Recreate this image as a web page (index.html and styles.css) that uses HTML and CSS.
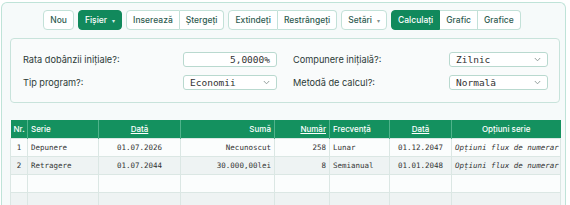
FILE: index.html
```html
<!DOCTYPE html>
<html lang="ro">
<head>
<meta charset="utf-8">
<title>Calculator</title>
<link rel="stylesheet" href="styles.css">
</head>
<body>
<div class="app">
  <div class="toolbar">
    <button class="btn">Nou</button>
    <button class="btn primary">Fișier <span class="caret">▾</span></button>
    <div class="group">
      <button class="btn">Inserează</button>
      <button class="btn">Ștergeți</button>
    </div>
    <div class="group">
      <button class="btn">Extindeți</button>
      <button class="btn">Restrângeți</button>
    </div>
    <button class="btn">Setări <span class="caret grey">▾</span></button>
    <div class="group">
      <button class="btn primary">Calculați</button>
      <button class="btn">Grafic</button>
      <button class="btn">Grafice</button>
    </div>
  </div>

  <div class="panel">
    <div class="col col-left">
      <div class="field">
        <span class="label">Rata dobânzii inițiale?:</span>
        <span class="control input">5,0000%</span>
      </div>
      <div class="field">
        <span class="label">Tip program?:</span>
        <span class="control select">Economii<svg class="chev" width="7" height="5" viewBox="0 0 7 5"><path d="M0.8 1 L3.5 3.8 L6.2 1" fill="none" stroke="#8a9693" stroke-width="0.9"/></svg></span>
      </div>
    </div>
    <div class="col col-right">
      <div class="field">
        <span class="label">Compunere inițială?:</span>
        <span class="control select">Zilnic<svg class="chev" width="7" height="5" viewBox="0 0 7 5"><path d="M0.8 1 L3.5 3.8 L6.2 1" fill="none" stroke="#8a9693" stroke-width="0.9"/></svg></span>
      </div>
      <div class="field">
        <span class="label">Metodă de calcul?:</span>
        <span class="control select">Normală<svg class="chev" width="7" height="5" viewBox="0 0 7 5"><path d="M0.8 1 L3.5 3.8 L6.2 1" fill="none" stroke="#8a9693" stroke-width="0.9"/></svg></span>
      </div>
    </div>
  </div>

  <table class="grid">
    <colgroup>
      <col class="c-nr"><col class="c-serie"><col class="c-data"><col class="c-suma">
      <col class="c-numar"><col class="c-frec"><col class="c-data2"><col class="c-opt">
    </colgroup>
    <thead>
      <tr>
        <th class="left">Nr.</th>
        <th class="left">Serie</th>
        <th class="center"><u>Dată</u></th>
        <th class="right">Sumă</th>
        <th class="right"><u>Număr</u></th>
        <th class="left">Frecvență</th>
        <th class="center"><u>Dată</u></th>
        <th class="center">Opțiuni serie</th>
      </tr>
    </thead>
    <tbody>
      <tr>
        <td class="center">1</td>
        <td>Depunere</td>
        <td class="center">01.07.2026</td>
        <td class="right">Necunoscut</td>
        <td class="right">258</td>
        <td>Lunar</td>
        <td class="center">01.12.2047</td>
        <td class="center"><i>Opțiuni flux de numerar</i></td>
      </tr>
      <tr class="alt">
        <td class="center">2</td>
        <td>Retragere</td>
        <td class="center">01.07.2044</td>
        <td class="right">30.000,00lei</td>
        <td class="right">8</td>
        <td>Semianual</td>
        <td class="center">01.01.2048</td>
        <td class="center"><i>Opțiuni flux de numerar</i></td>
      </tr>
      <tr>
        <td></td><td></td><td></td><td></td><td></td><td></td><td></td><td></td>
      </tr>
      <tr class="alt">
        <td></td><td></td><td></td><td></td><td></td><td></td><td></td><td></td>
      </tr>
    </tbody>
  </table>
</div>
</body>
</html>
```

FILE: styles.css
```css
html, body {
  margin: 0;
  padding: 0;
  background: #ffffff;
  height: 205px;
  overflow: hidden;
}

body {
  font-family: Inter, "Liberation Sans", sans-serif;
  color: #2c3a37;
}

.app {
  margin: 2px 4px 0 1px;
  height: 203px;
  overflow: hidden;
  box-sizing: border-box;
  border: 1px solid #bfe3d8;
  border-bottom: 0;
  border-radius: 6px 6px 0 0;
  background: #f6fafa;
  padding: 7px 5px 0 8px;
}

/* toolbar */
.toolbar {
  display: flex;
  justify-content: center;
  gap: 4px;
  height: 20px;
  margin-left: -6px;
}

.group {
  display: flex;
}

.btn {
  height: 20px;
  box-sizing: border-box;
  border: 1px solid #c3e1d8;
  background: #ffffff;
  border-radius: 4px;
  font-family: Inter, "Liberation Sans", sans-serif;
  font-size: 8.5px;
  font-weight: 500;
  color: #2f5c51;
  padding: 0 6px;
  margin: 0;
  display: flex;
  align-items: center;
  gap: 5px;
}

.btn.primary {
  background: #11895c;
  border-color: #11895c;
  color: #ffffff;
}

.group .btn {
  border-radius: 0;
}

.group .btn + .btn {
  border-left: 0;
}

.group .btn:first-child {
  border-radius: 4px 0 0 4px;
}

.group .btn:last-child {
  border-radius: 0 4px 4px 0;
}

.caret {
  font-size: 6px;
  color: #d6efe6;
}

.caret.grey {
  color: #7f8e8a;
}

/* settings panel */
.panel {
  margin-top: 8px;
  height: 65px;
  box-sizing: border-box;
  border: 1px solid #c8e3db;
  border-radius: 4px;
  background: #f9fbfb;
  padding: 13px 11px 0 12px;
  display: flex;
  gap: 16px;
}

.col {
  display: flex;
  flex-direction: column;
  gap: 8px;
}

.col-left {
  width: 254px;
}

.col-right {
  width: 255px;
}

.field {
  display: flex;
  justify-content: space-between;
  align-items: center;
  height: 15px;
}

.label {
  font-size: 9.2px;
  color: #2c3a37;
}

.control {
  height: 15px;
  box-sizing: border-box;
  border: 1px solid #b9d9cf;
  border-radius: 3px;
  background: #ffffff;
  font-family: "DejaVu Sans Mono", monospace;
  font-size: 9.5px;
  color: #333333;
  display: flex;
  align-items: center;
  padding: 0 6px;
}

.col-left .control {
  width: 94px;
}

.col-right .control {
  width: 99px;
}

.input {
  justify-content: flex-end;
}

.select {
  justify-content: space-between;
}

.chev {
  display: block;
}

/* table */
.grid {
  margin-top: 17px;
  width: 550px;
  border-collapse: collapse;
  table-layout: fixed;
  font-family: "DejaVu Sans Mono", monospace;
  font-size: 7.5px;
  color: #333333;
}

.c-nr { width: 17px; }
.c-serie { width: 71px; }
.c-data { width: 82px; }
.c-suma { width: 94px; }
.c-numar { width: 55px; }
.c-frec { width: 60px; }
.c-data2 { width: 62px; }
.c-opt { width: 109px; }

.grid th {
  height: 18px;
  background: #14915f;
  color: #ffffff;
  font-family: Inter, "Liberation Sans", sans-serif;
  font-size: 8px;
  font-weight: 500;
  border-left: 1px solid #4fb38b;
  padding: 0 3px;
}

.grid th:first-child {
  border-left: 0;
}

.grid td {
  height: 18px;
  box-sizing: border-box;
  padding: 0 3px;
  border: 1px solid #dbe7e4;
  background: #fbfdfd;
  white-space: nowrap;
  overflow: hidden;
}

.grid tr.alt td {
  background: #eef3f3;
}

.left { text-align: left; }
.center { text-align: center; }
.right { text-align: right; }

.grid u {
  text-underline-offset: 1px;
}
```
